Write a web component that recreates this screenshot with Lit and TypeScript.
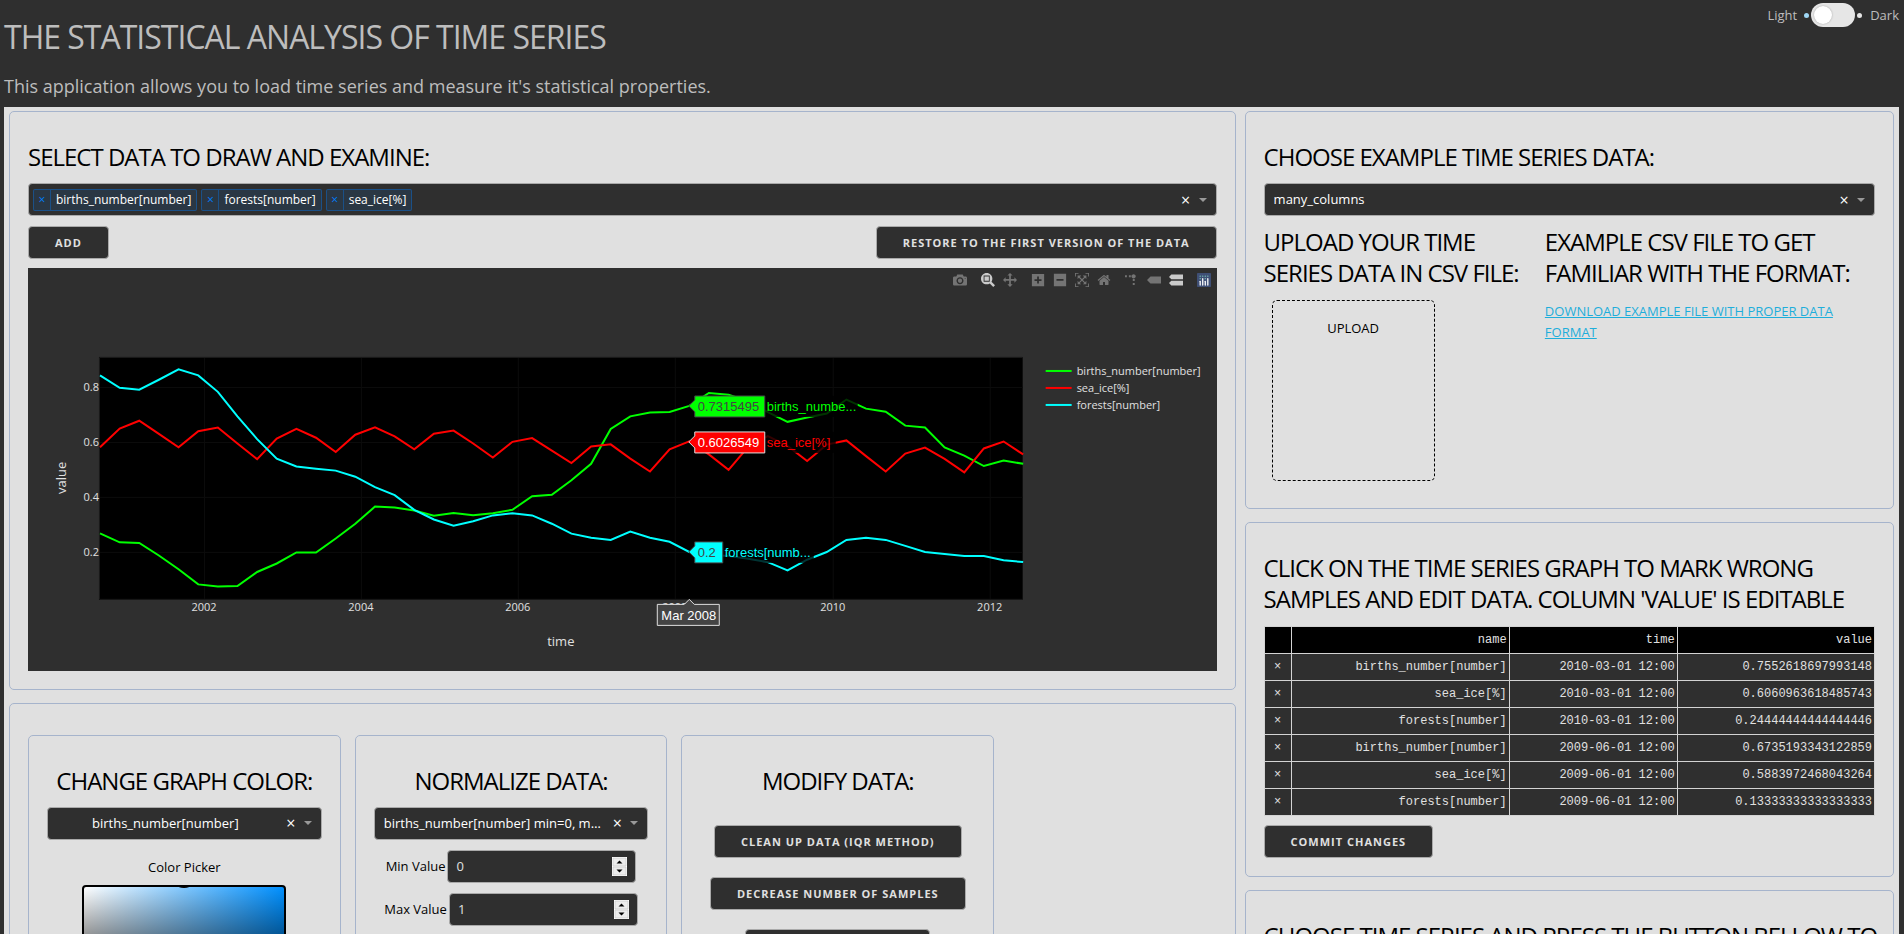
import { LitElement, html, svg, css } from "lit";
import { customElement, property } from "lit/decorators.js";

/* ---------- shared styles ---------- */

const base = css`
  * {
    box-sizing: border-box;
  }
  .panel {
    border: 1px solid #a6b4cc;
    border-radius: 5px;
    padding: 29px 18px 18px;
  }
  .heading {
    margin: 0 0 11px;
    font-size: 24px;
    line-height: 31px;
    font-weight: 400;
    letter-spacing: -1px;
    color: #000;
  }
  .btn {
    height: 33px;
    padding: 0 26px;
    border: 1px solid #aaa;
    border-radius: 4px;
    background: #2f2f2f;
    color: #e0e0e0;
    font-family: "Open Sans", "Noto Sans", sans-serif;
    font-size: 11px;
    font-weight: 700;
    line-height: 31px;
    letter-spacing: 1px;
    text-transform: uppercase;
    white-space: nowrap;
    cursor: pointer;
  }
`;

/* ---------- drop-down with a clear mark ---------- */

@customElement("ts-select")
class TsSelect extends LitElement {
  @property() value = "";
  @property() label = "";
  @property({ type: Boolean, reflect: true }) centered = false;
  @property({ attribute: false }) tags: string[] = [];

  static styles = [
    base,
    css`
      :host {
        display: block;
      }
      .box {
        display: flex;
        align-items: center;
        height: 33px;
        border: 1px solid #aaa;
        border-radius: 4px;
        background: #2f2f2f;
        color: #fff;
        padding-right: 9px;
      }
      .value {
        flex: 1;
        min-width: 0;
        height: 100%;
        appearance: none;
        border: 0;
        margin: 0;
        padding: 0 6px 0 9px;
        background: transparent;
        color: #fff;
        font: inherit;
        text-overflow: ellipsis;
        overflow: hidden;
        white-space: nowrap;
      }
      :host([centered]) .value {
        text-align-last: center;
        padding: 0 9px;
      }
      .tags {
        flex: 1;
        display: flex;
        gap: 4px;
        margin: 0;
        padding: 0 0 0 4px;
        list-style: none;
      }
      .tag {
        display: flex;
        height: 22px;
        border: 1px solid rgba(0, 126, 255, 0.36);
        border-radius: 2px;
        background: rgba(0, 126, 255, 0.1);
        font-size: 12px;
        line-height: 20px;
      }
      .drop {
        width: 17px;
        border: 0;
        border-right: 1px solid rgba(0, 126, 255, 0.36);
        padding: 0;
        background: transparent;
        color: #007eff;
        font: inherit;
      }
      .text {
        padding: 0 5px;
      }
      .clear {
        width: 16px;
        height: 24px;
        border: 0;
        padding: 0;
        background: transparent;
        color: #fff;
        font: inherit;
        font-size: 16px;
        line-height: 22px;
      }
      .arrow {
        width: 8px;
        height: 4px;
        margin-left: 5px;
        fill: #999;
      }
    `,
  ];

  render() {
    return html`<div class="box">
      ${this.tags.length
        ? html`<ul class="tags" aria-label=${this.label}>
            ${this.tags.map(
              (t) => html`<li class="tag">
                <button class="drop" aria-label="Remove ${t}">×</button><span class="text">${t}</span>
              </li>`
            )}
          </ul>`
        : html`<select class="value" aria-label=${this.label}>
            <option>${this.value}</option>
          </select>`}
      <button class="clear" aria-label="Clear">×</button>
      <svg class="arrow" viewBox="0 0 8 4" aria-hidden="true"><path d="M0 0h8L4 4z" /></svg>
    </div>`;
  }
}

/* ---------- chart ---------- */

const X0 = 72;
const STEP = 19.65;
const yOf = (v: number) => 339 - v * 274.7;

type Series = { name: string; color: string; values: number[] };

const SERIES: Series[] = [
  {
    name: "births_number[number]",
    color: "#00ff00",
    values: [
      0.268, 0.235, 0.233, 0.187, 0.137, 0.082, 0.074, 0.076, 0.127, 0.158, 0.198, 0.198, 0.249, 0.303, 0.365, 0.362,
      0.351, 0.332, 0.342, 0.334, 0.341, 0.354, 0.403, 0.408, 0.461, 0.521, 0.648, 0.694, 0.708, 0.71, 0.732, 0.779,
      0.772, 0.749, 0.709, 0.674, 0.69, 0.704, 0.755, 0.722, 0.711, 0.66, 0.653, 0.581, 0.551, 0.513, 0.533, 0.521,
    ],
  },
  {
    name: "sea_ice[%]",
    color: "#ff0000",
    values: [
      0.581, 0.649, 0.678, 0.63, 0.581, 0.64, 0.653, 0.595, 0.538, 0.613, 0.648, 0.616, 0.564, 0.627, 0.654, 0.621,
      0.574, 0.631, 0.642, 0.595, 0.544, 0.601, 0.615, 0.569, 0.524, 0.584, 0.592, 0.54, 0.493, 0.574, 0.603, 0.555,
      0.499, 0.583, 0.622, 0.586, 0.531, 0.591, 0.606, 0.549, 0.493, 0.558, 0.58, 0.539, 0.49, 0.577, 0.602, 0.555,
    ],
  },
  {
    name: "forests[number]",
    color: "#00ffff",
    values: [
      0.843, 0.798, 0.791, 0.827, 0.865, 0.843, 0.783, 0.694, 0.611, 0.54, 0.511, 0.503, 0.496, 0.474, 0.436, 0.407,
      0.353, 0.318, 0.296, 0.312, 0.333, 0.341, 0.333, 0.303, 0.267, 0.252, 0.244, 0.274, 0.252, 0.237, 0.2, 0.19,
      0.185, 0.175, 0.163, 0.133, 0.172, 0.2, 0.244, 0.252, 0.244, 0.222, 0.2, 0.193, 0.185, 0.185, 0.17, 0.163,
    ],
  },
];

const FLIP = "matrix(1 0 0 -1 0 850)";

type Icon = { label: string; w: number; d: string; t?: string; on?: boolean };

const TOOLS: Icon[][] = [
  [
    {
      label: "Download plot",
      w: 1000,
      d: "m500 450c-83 0-150-67-150-150 0-83 67-150 150-150 83 0 150 67 150 150 0 83-67 150-150 150z m400 150h-120c-16 0-34 13-39 29l-31 93c-6 15-23 28-40 28h-340c-16 0-34-13-39-28l-31-94c-6-15-23-28-40-28h-120c-55 0-100-45-100-100v-450c0-55 45-100 100-100h800c55 0 100 45 100 100v450c0 55-45 100-100 100z m-400-550c-138 0-250 112-250 250 0 138 112 250 250 250 138 0 250-112 250-250 0-138-112-250-250-250z m365 380c-19 0-35 16-35 35 0 19 16 35 35 35 19 0 35-16 35-35 0-19-16-35-35-35z",
    },
  ],
  [
    {
      label: "Zoom",
      w: 1000,
      on: true,
      d: "m1000-25l-250 251c40 63 63 138 63 218 0 224-182 406-407 406-224 0-406-182-406-406s183-406 407-406c80 0 155 22 218 62l250-250 125 125z m-812 250l0 438 437 0 0-438-437 0z m62 375l313 0 0-312-313 0 0 312z",
    },
    {
      label: "Pan",
      w: 1000,
      d: "m1000 350l-187 188 0-125-250 0 0 250 125 0-188 187-187-187 125 0 0-250-250 0 0 125-188-188 186-187 0 125 252 0 0-250-125 0 187-188 188 188-125 0 0 250 250 0 0-126 187 188z",
    },
  ],
  [
    {
      label: "Zoom in",
      w: 875,
      d: "m1 787l0-875 875 0 0 875-875 0z m687-500l-187 0 0-187-125 0 0 187-188 0 0 125 188 0 0 187 125 0 0-187 187 0 0-125z",
    },
    {
      label: "Zoom out",
      w: 875,
      d: "m0 788l0-876 875 0 0 876-875 0z m688-500l-500 0 0 125 500 0 0-125z",
    },
    {
      label: "Autoscale",
      w: 1000,
      d: "m250 850l-187 0-63 0 0-62 0-188 63 0 0 188 187 0 0 62z m688 0l-188 0 0-62 188 0 0-188 62 0 0 188 0 62-62 0z m-875-938l0 188-63 0 0-188 0-62 63 0 187 0 0 62-187 0z m875 188l0-188-188 0 0-62 188 0 62 0 0 62 0 188-62 0z m-125 188l-1 0-93-94-156 156 156 156 92-93 2 0 0 250-250 0 0-2 93-92-156-156-156 156 94 92 0 2-250 0 0-250 0 0 93 93 157-156-157-156-93 94 0 0 0-250 250 0 0 0-94 93 156 157 156-157-93-93 0 0 250 0 0 250z",
    },
    {
      label: "Reset axes",
      w: 928.6,
      d: "m786 296v-267q0-15-11-26t-25-10h-214v214h-143v-214h-214q-15 0-25 10t-11 26v267q0 1 0 2t0 2l321 264 321-264q1-1 1-4z m124 39l-34-41q-5-5-12-6h-2q-7 0-12 3l-386 322-386-322q-7-4-13-4-7 2-12 7l-35 41q-4 5-3 13t6 12l401 334q18 15 42 15t43-15l136-114v109q0 8 5 13t13 5h107q8 0 13-5t5-13v-227l122-102q5-5 6-12t-4-13z",
    },
  ],
  [
    {
      label: "Toggle spike lines",
      w: 1000,
      t: "matrix(1.5 0 0 -1.5 0 850)",
      d: "M512 409c0-57-46-104-103-104-57 0-104 47-104 104 0 57 47 103 104 103 57 0 103-46 103-103z m-327-39l92 0 0 92-92 0z m-185 0l92 0 0 92-92 0z m370-186l92 0 0 93-92 0z m0-184l92 0 0 92-92 0z",
    },
    {
      label: "Show closest data on hover",
      w: 1500,
      d: "m375 725l0 0-375-375 375-374 0-1 1125 0 0 750-1125 0z",
    },
    {
      label: "Compare data on hover",
      w: 1125,
      on: true,
      d: "m187 786l0 2-187-188 188-187 0 0 937 0 0 373-938 0z m0-499l0 1-187-188 188-188 0 0 937 0 0 376-938-1z",
    },
  ],
];

@customElement("ts-chart")
class TsChart extends LitElement {
  static styles = [
    base,
    css`
      :host {
        display: block;
        position: relative;
        background: #2f2f2f;
      }
      .plot {
        display: block;
        width: 100%;
        height: auto;
        font-family: "Open Sans", "Noto Sans", sans-serif;
      }
      .tick {
        font-size: 11px;
        fill: #e0e0e0;
      }
      .axis {
        font-size: 13px;
        fill: #e0e0e0;
      }
      .hover {
        font-family: "Liberation Sans", Arial, sans-serif;
        font-size: 13px;
      }
      .grid {
        stroke: #0c0c0c;
      }
      .line {
        fill: none;
        stroke-width: 2;
      }
      .bar {
        position: absolute;
        top: 5px;
        right: 2px;
        display: flex;
        gap: 6px;
      }
      .group {
        display: flex;
      }
      .tool {
        display: block;
        width: 22px;
        height: 14px;
        padding: 0 4px;
        border: 0;
        background: transparent;
        fill: #747474;
      }
      .tool.on {
        fill: #cacaca;
      }
      .icon {
        display: block;
        width: 14px;
        height: 14px;
      }
    `,
  ];

  private callout(x: number, y: number, w: number, text: string, name: string, nameW: number, color: string, ink: string, edge: string) {
    return svg`
      <rect x=${x + 5 + w} y=${y - 10} width=${nameW} height="21" fill="#000" opacity="0.8" />
      <path d="M${x},${y}l6,-6v-4h${w}v21h${-w}v-5z" fill=${color} stroke=${edge} />
      <text x=${x + 9} y=${y + 5} fill=${ink}>${text}</text>
      <text x=${x + 8 + w} y=${y + 5} fill=${color}>${name}</text>`;
  }

  render() {
    const years = [2002, 2004, 2006, 2008, 2010, 2012];
    const xs = [176, 333, 490, 647, 805, 962];
    const ticks = [0.2, 0.4, 0.6, 0.8];
    return html`
      <svg class="plot" viewBox="0 0 1189 403" role="img" aria-label="Time series chart">
        <rect x="71" y="89" width="924" height="243" fill="#000" />
        ${xs.map((x) => svg`<line class="grid" x1=${x + 0.5} x2=${x + 0.5} y1="90" y2="331" />`)}
        ${ticks.map((t) => svg`<line class="grid" x1="72" x2="995" y1=${Math.round(yOf(t)) + 0.5} y2=${Math.round(yOf(t)) + 0.5} />`)}
        <path d="M995 89.5H71.5V331.5H995" fill="none" stroke="#1a1a1a" />
        ${SERIES.map(
          (s) => svg`<path class="line" stroke=${s.color}
            d=${"M" + s.values.map((v, i) => `${(X0 + i * STEP).toFixed(1)},${yOf(v).toFixed(1)}`).join("L")} />`
        )}
        ${years.map((y, i) => svg`<text class="tick" x=${xs[i]} y="343" text-anchor="middle">${y}</text>`)}
        ${ticks.map((t) => svg`<text class="tick" x="71" y=${Math.round(yOf(t)) + 4} text-anchor="end">${t}</text>`)}
        <text class="axis" x="533" y="378" text-anchor="middle">time</text>
        <text class="axis" transform="translate(38 210) rotate(-90)" text-anchor="middle">value</text>
        ${SERIES.map(
          (s, i) => svg`<line class="line" stroke=${s.color} x1="1018" x2="1044" y1=${103 + i * 17} y2=${103 + i * 17} />
            <text class="tick" x="1049" y=${107 + i * 17}>${s.name}</text>`
        )}
        <g class="hover">
          ${this.callout(661, 138, 70, "0.7315495", "births_numbe...", 94, "#00ff00", "#444", "#444")}
          ${this.callout(661, 174, 70, "0.6026549", "sea_ice[%]", 72, "#ff0000", "#fff", "#e0e0e0")}
          ${this.callout(661, 284, 28, "0.2", "forests[numb...", 92, "#00ffff", "#444", "#444")}
          <path d="M661.5,331.5l5,5h25v21h-62v-21h27z" fill="#444" stroke="#e0e0e0" />
          <text x="661" y="352" fill="#fff" text-anchor="middle">Mar 2008</text>
        </g>
      </svg>
      <div class="bar">
        ${TOOLS.map(
          (g) => html`<div class="group">
            ${g.map(
              (t) => html`<button class="tool ${t.on ? "on" : ""}" aria-label=${t.label}>
                <svg class="icon" viewBox="0 0 ${t.w} 1000"><path transform=${t.t ?? FLIP} d=${t.d} /></svg>
              </button>`
            )}
          </div>`
        )}
        <div class="group">
          <button class="tool" aria-label="Produced with Plotly">
            <svg class="icon" viewBox="0 0 132 132">
              <rect width="132" height="132" rx="6" fill="#3f4f75" />
              <g fill="#80cfbe">
                ${[[78, 54], [102, 30], [78, 30], [54, 30], [30, 30], [30, 54]].map(
                  ([x, y]) => svg`<circle cx=${x} cy=${y} r="6" />`
                )}
              </g>
              <g fill="#fff">
                <rect x="24" y="72" width="12" height="48" rx="6" />
                <rect x="72" y="72" width="12" height="48" rx="6" />
                <rect x="48" y="48" width="12" height="72" rx="6" />
                <rect x="96" y="48" width="12" height="72" rx="6" />
              </g>
            </svg>
          </button>
        </div>
      </div>`;
  }
}

/* ---------- page ---------- */

const ROWS = [
  ["births_number[number]", "2010-03-01 12:00", "0.7552618697993148"],
  ["sea_ice[%]", "2010-03-01 12:00", "0.6060963618485743"],
  ["forests[number]", "2010-03-01 12:00", "0.24444444444444446"],
  ["births_number[number]", "2009-06-01 12:00", "0.6735193343122859"],
  ["sea_ice[%]", "2009-06-01 12:00", "0.5883972468043264"],
  ["forests[number]", "2009-06-01 12:00", "0.13333333333333333"],
];

@customElement("app-root")
class AppRoot extends LitElement {
  static styles = [
    base,
    css`
      :host {
        display: block;
        min-height: 100vh;
        background: #2f2f2f;
        color: #000;
        font-family: "Open Sans", "Noto Sans", sans-serif;
        font-size: 13px;
        line-height: 21px;
      }
      .head {
        display: flex;
        justify-content: space-between;
        height: 107px;
        padding: 0 5px 0 4px;
        color: #bdbdbd;
      }
      .title {
        margin: 0;
        padding-top: 17px;
        font-size: 32px;
        line-height: 40px;
        font-weight: 400;
        letter-spacing: -1px;
      }
      .lead {
        margin: 0;
        padding-top: 16px;
        font-size: 18px;
        line-height: 26px;
      }
      .theme {
        display: flex;
        align-items: center;
        height: 24px;
        margin-top: 3px;
      }
      .dot {
        width: 5px;
        height: 5px;
        border-radius: 50%;
        background: #e6e6e6;
        margin: 0 8px 0 2px;
      }
      .dot.active {
        background: #9fd7f5;
        margin: 0 2px 0 7px;
      }
      .switch {
        appearance: none;
        width: 44px;
        height: 24px;
        margin: 0;
        padding: 3px;
        border-radius: 12px;
        background: #e6e6e6;
      }
      .switch::before {
        content: "";
        display: block;
        width: 18px;
        height: 18px;
        border-radius: 50%;
        background: #fff;
        box-shadow: 0 0 2px rgba(0, 0, 0, 0.3);
      }
      .body {
        display: grid;
        grid-template-columns: minmax(0, 17fr) minmax(0, 9fr);
        gap: 9px;
        margin: 0 5px 0 4px;
        padding: 4px 5px;
        background: #e0e0e0;
      }
      .column {
        display: flex;
        flex-direction: column;
        gap: 13px;
      }
      .side .heading {
        margin-right: -8px;
      }
      .side .halves .heading {
        margin-right: 0;
      }
      .actions {
        display: flex;
        justify-content: space-between;
        margin: 10px 0 9px;
      }
      .cards {
        display: grid;
        grid-template-columns: repeat(3, minmax(0, 3fr)) minmax(0, 2fr);
        gap: 14px;
        padding-top: 2px;
      }
      .card {
        min-height: 340px;
        text-align: center;
      }
      .caption {
        margin: 17px 0 7px;
      }
      .picker {
        position: relative;
        width: 204px;
        height: 120px;
        margin: 0 auto;
        border: 2px solid #000;
        border-radius: 4px;
        overflow: hidden;
        background: linear-gradient(to top, #000, transparent), linear-gradient(to right, #fff, #0090ff);
      }
      .knob {
        position: absolute;
        top: -19px;
        left: calc(50% - 12px);
        width: 24px;
        height: 20px;
        border-radius: 50%;
        background: #000;
      }
      .field {
        display: flex;
        align-items: center;
        justify-content: center;
        gap: 2px;
        margin-top: 10px;
      }
      .entry {
        position: relative;
        display: flex;
        width: 189px;
      }
      .number {
        width: 100%;
        height: 33px;
        border: 1px solid #aaa;
        border-radius: 4px;
        padding: 0 32px 0 8px;
        background: #2f2f2f;
        color: #e0e0e0;
        font: inherit;
        appearance: textfield;
      }
      .number::-webkit-inner-spin-button {
        appearance: none;
      }
      .spin {
        position: absolute;
        right: 9px;
        top: 7px;
        width: 15px;
        height: 19px;
      }
      .stack {
        display: flex;
        flex-direction: column;
        align-items: center;
        gap: 19px;
        margin-top: 29px;
      }
      .halves {
        display: grid;
        grid-template-columns: minmax(0, 23fr) minmax(0, 27fr);
        margin-top: 10px;
      }
      .first {
        padding-right: 20px;
      }
      .upload {
        display: block;
        width: 163px;
        height: 181px;
        margin: 12px 8px 9px;
        padding-top: 17px;
        border: 1px dashed #000;
        border-radius: 5px;
        text-align: center;
      }
      .file {
        display: none;
      }
      .download {
        margin: 13px 0 0;
      }
      .link {
        color: #1eaedb;
      }
      .data {
        width: 100%;
        border-collapse: collapse;
        table-layout: fixed;
        margin: 12px 0 9px;
        background: #2f2f2f;
        color: #e0e0e0;
        font-family: "Liberation Mono", monospace;
        font-size: 12px;
        line-height: 26px;
        text-align: right;
      }
      .cell {
        height: 27px;
        padding: 0 2px;
        border: 1px solid #d3d3d3;
        font-weight: 400;
      }
      .top {
        background: #000;
      }
      .c0 {
        width: 27px;
      }
      .c1 {
        width: 218px;
      }
      .c2 {
        width: 168px;
      }
      .remove {
        display: block;
        width: 100%;
        border: 0;
        padding: 0;
        background: transparent;
        color: inherit;
        font: inherit;
      }
    `,
  ];

  private numberField(id: string, label: string, value: number) {
    return html`<div class="field">
      <label for=${id}>${label}</label>
      <div class="entry">
        <input class="number" id=${id} type="number" .value=${String(value)} />
        <svg class="spin" viewBox="0 0 15 19" aria-hidden="true">
          <rect width="15" height="19" fill="#fff" />
          <path d="M1 1h13v8H1zM1 10h13v8H1z" fill="#ececec" stroke="#bbb" stroke-width="0.5" />
          <path d="M4.5 6.5h6L7.5 3.5zM4.5 12.5h6L7.5 15.5z" fill="#000" />
        </svg>
      </div>
    </div>`;
  }

  render() {
    return html`
      <header class="head">
        <div>
          <h1 class="title">THE STATISTICAL ANALYSIS OF TIME SERIES</h1>
          <p class="lead">This application allows you to load time series and measure it's statistical properties.</p>
        </div>
        <div class="theme">
          <label for="theme">Light</label>
          <span class="dot active"></span>
          <input class="switch" id="theme" type="checkbox" role="switch" />
          <span class="dot"></span>
          <label for="theme">Dark</label>
        </div>
      </header>
      <main class="body">
        <div class="column">
          <section class="panel">
            <h2 class="heading">SELECT DATA TO DRAW AND EXAMINE:</h2>
            <ts-select
              label="Data to draw"
              .tags=${["births_number[number]", "forests[number]", "sea_ice[%]"]}
            ></ts-select>
            <div class="actions">
              <button class="btn">Add</button>
              <button class="btn">Restore to the first version of the data</button>
            </div>
            <ts-chart></ts-chart>
          </section>
          <section class="panel">
            <div class="cards">
              <section class="panel card">
                <h2 class="heading">CHANGE GRAPH COLOR:</h2>
                <ts-select label="Series" value="births_number[number]" centered></ts-select>
                <p class="caption">Color Picker</p>
                <div class="picker"><span class="knob"></span></div>
              </section>
              <section class="panel card">
                <h2 class="heading">NORMALIZE DATA:</h2>
                <ts-select label="Series to normalize" value="births_number[number] min=0, max=1"></ts-select>
                ${this.numberField("min", "Min Value", 0)} ${this.numberField("max", "Max Value", 1)}
              </section>
              <section class="panel card">
                <h2 class="heading">MODIFY DATA:</h2>
                <div class="stack">
                  <button class="btn">Clean up data (IQR method)</button>
                  <button class="btn">Decrease number of samples</button>
                  <button class="btn">Interpolate series</button>
                </div>
              </section>
            </div>
          </section>
        </div>
        <div class="column side">
          <section class="panel">
            <h2 class="heading">CHOOSE EXAMPLE TIME SERIES DATA:</h2>
            <ts-select label="Example data" value="many_columns"></ts-select>
            <div class="halves">
              <div class="first">
                <h2 class="heading">UPLOAD YOUR TIME SERIES DATA IN CSV FILE:</h2>
                <label class="upload">UPLOAD<input class="file" type="file" accept=".csv" /></label>
              </div>
              <div>
                <h2 class="heading">EXAMPLE CSV FILE TO GET FAMILIAR WITH THE FORMAT:</h2>
                <p class="download">
                  <a class="link" href="#example">DOWNLOAD EXAMPLE FILE WITH PROPER DATA FORMAT</a>
                </p>
              </div>
            </div>
          </section>
          <section class="panel">
            <h2 class="heading">CLICK ON THE TIME SERIES GRAPH TO MARK WRONG SAMPLES AND EDIT DATA. COLUMN 'VALUE' IS EDITABLE</h2>
            <table class="data">
              <thead>
                <tr class="top">
                  <th class="cell c0" aria-label="Delete"></th>
                  <th class="cell c1">name</th>
                  <th class="cell c2">time</th>
                  <th class="cell">value</th>
                </tr>
              </thead>
              <tbody>
                ${ROWS.map(
                  (r) => html`<tr>
                    <td class="cell"><button class="remove" aria-label="Delete row">×</button></td>
                    ${r.map((c) => html`<td class="cell">${c}</td>`)}
                  </tr>`
                )}
              </tbody>
            </table>
            <button class="btn">Commit changes</button>
          </section>
          <section class="panel">
            <h2 class="heading">CHOOSE TIME SERIES AND PRESS THE BUTTON BELLOW TO CALCULATE STATISTICS</h2>
          </section>
        </div>
      </main>
    `;
  }
}
